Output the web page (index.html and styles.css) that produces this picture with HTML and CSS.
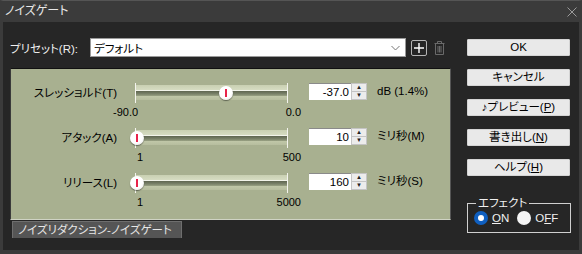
FILE: index.html
```html
<!DOCTYPE html>
<html lang="ja">
<head>
    <meta charset="UTF-8">
    <title>ノイズゲート</title>
    <link rel="stylesheet" href="styles.css">
</head>
<body>
    <div class="window">
        <div class="titlebar">
            <span class="title">ノイズゲート</span>
            <svg class="close" width="10" height="10" viewBox="0 0 10 10"><path d="M0.5 0.5L9.5 9.5M9.5 0.5L0.5 9.5" stroke="#9a9a9a" stroke-width="1"/></svg>
        </div>
        <div class="content">
            <div class="main">
                <div class="preset-row">
                    <span class="preset-label">プリセット(R):</span>
                    <div class="combo">
                        <span>デフォルト</span>
                        <svg width="9" height="6" viewBox="0 0 9 6"><path d="M0.5 1L4.5 5L8.5 1" fill="none" stroke="#777" stroke-width="1"/></svg>
                    </div>
                    <div class="icon-btn">
                        <svg width="14" height="14" viewBox="0 0 14 14"><path d="M7 2V12M2 7H12" stroke="#fff" stroke-width="1.4"/></svg>
                    </div>
                    <svg class="trash" width="11" height="14" viewBox="0 0 11 14"><path d="M0.5 2.5H10.5M3.5 2.5V0.5H7.5V2.5M1.5 2.5V13.5H9.5V2.5M4 5V11.5M5.5 5V11.5M7 5V11.5" fill="none" stroke="#6a6a6a" stroke-width="1"/></svg>
                </div>

                <div class="panel">
                    <div class="param">
                        <div class="param-label">スレッショルド(T)</div>
                        <div class="slider">
                            <div class="track">
                                <div class="thumb" style="left: 58.9%"></div>
                            </div>
                            <div class="scale scale-wide"><span>-90.0</span><span>0.0</span></div>
                        </div>
                        <div class="spin">
                            <div class="spin-value">-37.0</div>
                            <div class="spin-arrows"><span>▲</span><span>▼</span></div>
                        </div>
                        <div class="unit">dB (1.4%)</div>
                    </div>
                    <div class="param">
                        <div class="param-label">アタック(A)</div>
                        <div class="slider">
                            <div class="track">
                                <div class="thumb" style="left: 0%"></div>
                            </div>
                            <div class="scale"><span>1</span><span>500</span></div>
                        </div>
                        <div class="spin">
                            <div class="spin-value">10</div>
                            <div class="spin-arrows"><span>▲</span><span>▼</span></div>
                        </div>
                        <div class="unit">ミリ秒(M)</div>
                    </div>
                    <div class="param">
                        <div class="param-label">リリース(L)</div>
                        <div class="slider">
                            <div class="track">
                                <div class="thumb" style="left: 0%"></div>
                            </div>
                            <div class="scale"><span>1</span><span>5000</span></div>
                        </div>
                        <div class="spin">
                            <div class="spin-value">160</div>
                            <div class="spin-arrows"><span>▲</span><span>▼</span></div>
                        </div>
                        <div class="unit">ミリ秒(S)</div>
                    </div>
                </div>
                <div class="tab">ノイズリダクション-ノイズゲート</div>
            </div>

            <div class="side">
                <div class="button">OK</div>
                <div class="button">キャンセル</div>
                <div class="button">♪プレビュー(<u>P</u>)</div>
                <div class="button">書き出し(<u>N</u>)</div>
                <div class="button">ヘルプ(<u>H</u>)</div>
                <fieldset class="effect">
                    <legend>エフェクト</legend>
                    <label class="radio"><span class="dot checked"></span><span><u>O</u>N</span></label>
                    <label class="radio"><span class="dot"></span><span>O<u>F</u>F</span></label>
                </fieldset>
            </div>
        </div>
    </div>
</body>
</html>
```

FILE: styles.css
```css
body {
    margin: 0;
    padding: 0;
    background-color: #262626;
    font-family: "Liberation Sans", "Noto Sans CJK JP", sans-serif;
    font-size: 11.5px;
    font-feature-settings: "palt" 1;
    color: #e6e6e6;
}
.window {
    width: 582px;
    height: 254px;
    box-sizing: border-box;
    background-color: #262626;
    border-top: 1px solid #555;
    border-left: 3px solid #3b3b3b;
    border-right: 3px solid #3b3b3b;
    border-bottom: 4px solid #3b3b3b;
    display: flex;
    flex-direction: column;
}
.titlebar {
    height: 21px;
    background-color: #3b3b3b;
    margin: 0 -3px;
    padding: 0 5px;
    display: flex;
    align-items: center;
    justify-content: space-between;
}
.title {
    color: #e8e8e8;
    font-size: 12px;
    line-height: 21px;
}
.content {
    display: flex;
    padding-left: 7px;
}
.main {
    width: 441px;
    display: flex;
    flex-direction: column;
}
.preset-row {
    display: flex;
    align-items: center;
    margin-top: 16px;
    height: 19px;
}
.preset-label {
    width: 80px;
    color: #f0f0f0;
}
.combo {
    width: 316px;
    height: 19px;
    box-sizing: border-box;
    background-color: #fff;
    border: 1px solid #9a9a9a;
    color: #000;
    display: flex;
    align-items: center;
    justify-content: space-between;
    padding: 0 5px 0 3px;
}
.icon-btn {
    width: 16px;
    height: 16px;
    box-sizing: border-box;
    margin-left: 5px;
    border: 1px solid #b5b5b5;
    border-radius: 2px;
    display: flex;
    align-items: center;
    justify-content: center;
}
.trash {
    margin-left: 7px;
}
.panel {
    margin-top: 11px;
    height: 152px;
    box-sizing: border-box;
    background-color: #a8b090;
    border-top: 1px solid #111;
    border-left: 1px solid #3a3a3a;
    border-right: 1px solid #555;
    border-bottom: 1px solid #cfd3c4;
    padding-top: 14px;
    color: #000;
}
.param {
    display: flex;
    align-items: flex-start;
    margin-bottom: 9px;
}
.param-label {
    width: 106px;
    line-height: 20px;
    text-align: right;
}
.slider {
    margin-left: 18px;
    width: 153px;
}
.track {
    position: relative;
    height: 20px;
    border-left: 1px solid #f4f4ee;
    border-right: 1px solid #f4f4ee;
    box-sizing: border-box;
    background: linear-gradient(to bottom,
        #a8b090 0px, #a8b090 2px,
        #c9d0b2 2px, #d6dcc2 7px,
        #f2f4ea 7px, #f2f4ea 8px,
        #5e6550 8px, #7b836a 11px, #9aa284 13px,
        #c0c7a8 13px, #b6bd9e 17px,
        #a8b090 17px);
}
.thumb {
    position: absolute;
    top: 3px;
    width: 14px;
    height: 14px;
    margin-left: -6px;
    box-sizing: border-box;
    border-radius: 50%;
    background: radial-gradient(circle at 45% 40%, #fff 55%, #d8d8d8 100%);
    box-shadow: 0 1px 1px rgba(0, 0, 0, 0.45);
}
.thumb::after {
    content: "";
    position: absolute;
    left: 6px;
    top: 3px;
    width: 2px;
    height: 8px;
    background-color: #e8244a;
}
.scale {
    display: flex;
    justify-content: space-between;
    width: 164px;
    margin-top: 2px;
    margin-left: 2px;
    line-height: 14px;
    font-size: 11px;
}
.scale-wide {
    margin-left: -22px;
    width: 188px;
}
.spin {
    display: flex;
    margin-left: 21px;
    height: 17px;
    background-color: #fff;
}
.spin-value {
    width: 42px;
    padding-right: 2px;
    text-align: right;
    line-height: 16px;
    border-top: 1px solid #8a8a8a;
    box-sizing: border-box;
}
.spin-arrows {
    width: 16px;
    display: flex;
    flex-direction: column;
    background-color: #ececec;
    border: 1px solid #c4c4c4;
    box-sizing: border-box;
}
.spin-arrows span {
    flex: 1;
    font-size: 6px;
    line-height: 7px;
    text-align: center;
    color: #222;
}
.spin-arrows span + span {
    border-top: 1px solid #c4c4c4;
}
.unit {
    margin-left: 10px;
    line-height: 17px;
}
.tab {
    margin-top: 1px;
    margin-left: 2px;
    width: 170px;
    height: 17px;
    box-sizing: border-box;
    background-color: #555;
    border: 1px solid #6e6e6e;
    border-bottom: none;
    color: #e6e6e6;
    line-height: 16px;
    padding-left: 5px;
    white-space: nowrap;
    overflow: hidden;
}
.side {
    margin-left: 16px;
    width: 104px;
    display: flex;
    flex-direction: column;
}
.button {
    margin-top: 13px;
    height: 17px;
    box-sizing: border-box;
    width: 103px;
    background-color: #e9e9e9;
    border: 1px solid #d4d4d4;
    border-radius: 1px;
    color: #000;
    text-align: center;
    line-height: 15px;
}
.button:first-child {
    margin-top: 17px;
}
.effect {
    margin: 20px 0 0 0;
    padding: 1px 0 2px 6px;
    width: 104px;
    height: 37px;
    box-sizing: border-box;
    border: 1px solid #d0d0d0;
    display: flex;
    align-items: center;
    gap: 8px;
}
.effect legend {
    padding: 0 2px;
    margin-left: 2px;
    line-height: 14px;
    color: #f0f0f0;
}
.radio {
    display: flex;
    align-items: center;
    gap: 4px;
    color: #f0f0f0;
}
.dot {
    width: 14px;
    height: 14px;
    border-radius: 50%;
    background-color: #f4f4f4;
    box-sizing: border-box;
}
.dot.checked {
    background-color: #fff;
    border: 4px solid #0f5fc0;
}
```
